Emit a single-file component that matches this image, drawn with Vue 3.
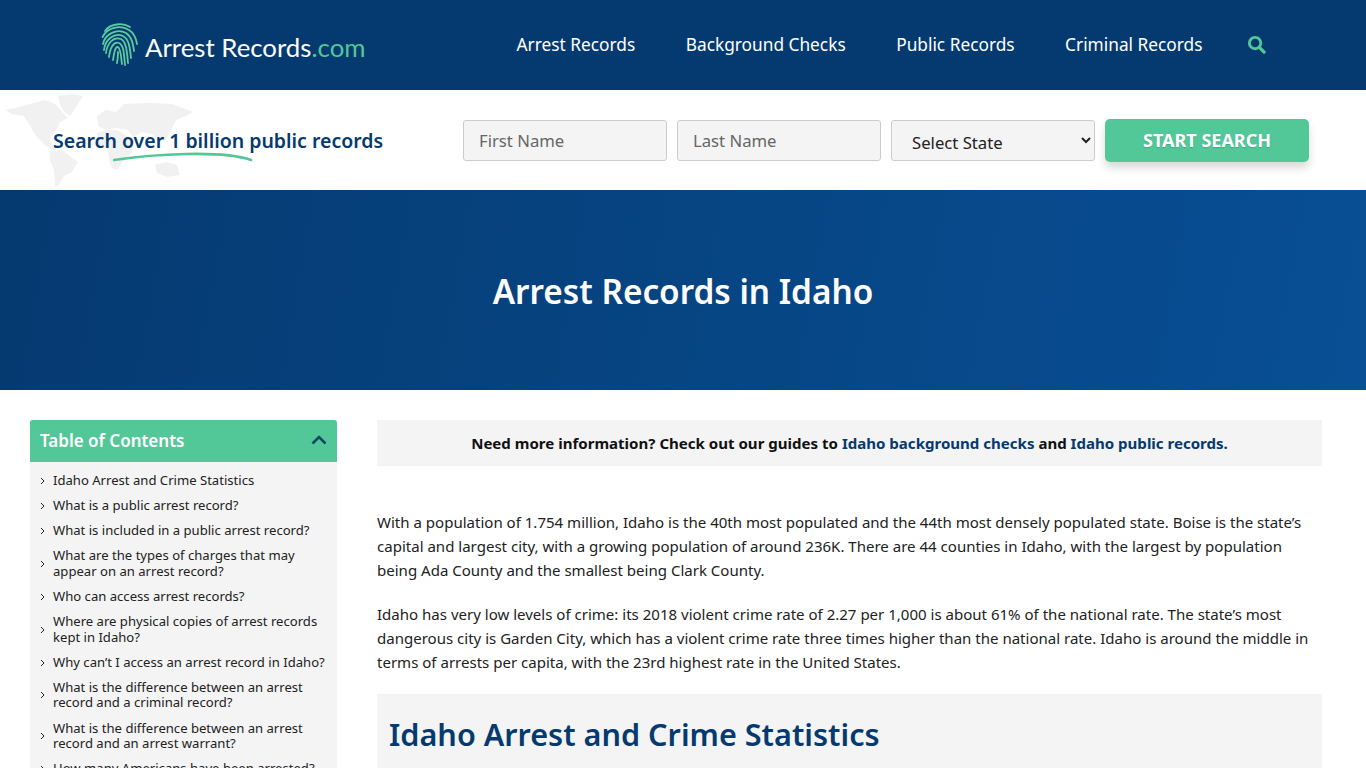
<template>
  <div class="page">
    <header class="topbar">
      <a class="logo" href="#">
        <svg class="print" viewBox="0 0 38 44" fill="none" stroke="#5ccca0" stroke-width="1.800" stroke-linecap="round">
          <path d="M4 9C9 2 21 0 29 5" />
          <path d="M1.500 15C6 6 19 2 28 8C33 11 35 16 36 22" />
          <path d="M2 22C4 12 16 6 25 11C31 15 32 22 33 29" />
          <path d="M3 28C4 18 13 10 22 14C28 17 29 26 30 36" />
          <path d="M5 31C6 22 12 14 20 17C25 19 26 29 27 41" />
          <path d="M8 35C9 27 12 19 18 21C23 23 23 33 24 43" />
          <path d="M12 38C13 32 14 24 17 25C20 27 20 36 21 42" />
          <path d="M16 41C17 36 17 32 17 30" />
        </svg>
        <span class="logo-text">Arrest Records<em>.com</em></span>
      </a>
      <nav class="main-nav">
        <a v-for="link in navLinks" :key="link" href="#">{{ link }}</a>
        <svg class="search-icon" viewBox="0 0 20 20" fill="none" stroke="#52c798" stroke-linecap="round">
          <circle cx="8.500" cy="8.500" r="6" stroke-width="3" />
          <path d="M13 13l5 5" stroke-width="3.400" />
        </svg>
      </nav>
    </header>

    <section class="searchbar">
      <svg class="world" viewBox="0 0 200 100" fill="#f1f1f1">
        <path d="M5 20L15 18L30 14L45 10L55 14L62 22L68 28L60 32L58 38L52 44L50 50L54 58L58 62L52 60L44 54L36 46L30 36L24 26L12 24Z" />
        <path d="M58 6L72 4L83 6L78 14L70 26L64 22L60 14Z" />
        <path d="M50 62L62 60L72 68L78 72L72 82L64 86L58 96L55 96L54 80L50 70Z" />
        <path d="M97 26L106 20L116 22L124 14L150 13L172 14L193 22L186 26L176 30L172 38L166 50L158 50L152 44L142 42L133 47L128 40L116 38L106 40L98 36Z" />
        <path d="M97 43L106 40L117 40L124 44L133 50L132 62L124 70L117 80L112 78L110 73L107 57L98 57Z" />
        <path d="M155 75L167 72L177 75L180 85L167 87L157 83Z" />
      </svg>
      <h2 class="slogan">
        Search over 1 billion public records
        <svg class="swoosh" viewBox="0 0 140 12" fill="none" stroke="#52c798" stroke-width="2.600" stroke-linecap="round">
          <path d="M1 9C40 3 110 -1 138 9" />
        </svg>
      </h2>
      <form class="search-form" @submit.prevent>
        <input type="text" placeholder="First Name" />
        <input type="text" placeholder="Last Name" />
        <select>
          <option>Select State</option>
        </select>
        <button type="submit">START SEARCH</button>
      </form>
    </section>

    <section class="hero">
      <h1>Arrest Records in Idaho</h1>
    </section>

    <div class="content">
      <aside class="toc">
        <div class="toc-head">
          <span>Table of Contents</span>
          <svg viewBox="0 0 16 10" fill="none" stroke="#0f4a63" stroke-width="2.600">
            <path d="M1.500 8.500L8 2l6.500 6.500" />
          </svg>
        </div>
        <ul>
          <li v-for="item in tocItems" :key="item">
            <svg viewBox="0 0 5 8" fill="none" stroke="#222" stroke-width="1">
              <path d="M1 1l3 3-3 3" />
            </svg>
            <a href="#">{{ item }}</a>
          </li>
        </ul>
      </aside>

      <main class="article">
        <p class="guides">
          Need more information? Check out our guides to
          <a href="#">Idaho background checks</a> and
          <a href="#">Idaho public records.</a>
        </p>
        <p>
          With a population of 1.754 million, Idaho is the 40th most populated and the 44th most densely populated state. Boise is the state’s capital and largest city, with a growing population of around 236K. There are 44 counties in Idaho, with the largest by population being Ada County and the smallest being Clark County.
        </p>
        <p>
          Idaho has very low levels of crime: its 2018 violent crime rate of 2.27 per 1,000 is about 61% of the national rate. The state’s most dangerous city is Garden City, which has a violent crime rate three times higher than the national rate. Idaho is around the middle in terms of arrests per capita, with the 23rd highest rate in the United States.
        </p>
        <h2 class="section-title">Idaho Arrest and Crime Statistics</h2>
      </main>
    </div>
  </div>
</template>

<script setup>
const navLinks = ["Arrest Records", "Background Checks", "Public Records", "Criminal Records"];

const tocItems = [
  "Idaho Arrest and Crime Statistics",
  "What is a public arrest record?",
  "What is included in a public arrest record?",
  "What are the types of charges that may appear on an arrest record?",
  "Who can access arrest records?",
  "Where are physical copies of arrest records kept in Idaho?",
  "Why can’t I access an arrest record in Idaho?",
  "What is the difference between an arrest record and a criminal record?",
  "What is the difference between an arrest record and an arrest warrant?",
  "How many Americans have been arrested?"
];
</script>

<style>
html,
body {
  margin: 0;
  overflow: hidden;
}
</style>

<style scoped>
.page {
  height: 768px;
  overflow: hidden;
  background: #fff;
  color: #222;
  font-family: "Noto Sans", "Open Sans", sans-serif;
}
a {
  text-decoration: none;
}

/* top bar */
.topbar {
  height: 90px;
  box-sizing: border-box;
  padding: 0 100px 2px 101px;
  background: #053a70;
  display: flex;
  align-items: center;
  justify-content: space-between;
}
.logo {
  display: flex;
  align-items: center;
  gap: 6px;
}
.print {
  width: 38px;
  height: 44px;
}
.logo-text {
  font-family: Lato, sans-serif;
  font-size: 25.8px;
  color: #fff;
  margin-top: 5px;
}
.logo-text em {
  font-style: normal;
  color: #52c798;
}
.main-nav {
  display: flex;
  align-items: center;
  gap: 50.5px;
}
.main-nav a {
  color: #fff;
  font-size: 17.3px;
}
.search-icon {
  width: 19px;
  height: 19px;
  margin-left: -6px;
}

/* search strip */
.searchbar {
  position: relative;
  height: 100px;
  padding: 0 57px 0 53px;
  display: flex;
  align-items: center;
  justify-content: space-between;
}
.world {
  position: absolute;
  left: 0;
  top: 0;
  width: 200px;
  height: 100px;
}
.slogan {
  position: relative;
  margin: 0;
  font-size: 19.5px;
  font-weight: 600;
  color: #053a70;
}
.swoosh {
  position: absolute;
  left: 60px;
  top: 24px;
  width: 140px;
  height: 12px;
}
.search-form {
  display: flex;
  gap: 10px;
  align-items: center;
}
.search-form input,
.search-form select {
  width: 204px;
  height: 41px;
  box-sizing: border-box;
  background: #f4f4f4;
  border: 1px solid #ccc;
  border-radius: 3px;
  font-family: inherit;
  font-size: 16.7px;
  color: #222;
}
.search-form input {
  padding: 0 15px;
}
.search-form input::placeholder {
  color: #666;
  opacity: 1;
}
.search-form select {
  padding: 5px 0 0 16px;
}
.search-form button {
  width: 204px;
  height: 43px;
  border: 0;
  border-radius: 5px;
  background: #52c798;
  color: #fff;
  font-family: inherit;
  font-size: 18px;
  font-weight: 700;
  text-shadow: 0 1px 1px rgba(0, 0, 0, 0.15);
  box-shadow: 0 6px 8px rgba(0, 0, 0, 0.15);
}

/* hero */
.hero {
  height: 200px;
  background: linear-gradient(100deg, #053a70, #084f95);
  display: flex;
  align-items: center;
  justify-content: center;
}
.hero h1 {
  margin: 2px 0 0;
  color: #fff;
  font-size: 33.35px;
  font-weight: 600;
}

/* body */
.content {
  display: grid;
  grid-template-columns: 307px 945px;
  gap: 40px;
  padding: 30px 44px 0 30px;
}
.toc {
  background: #f4f4f4;
  align-self: start;
}
.toc-head {
  height: 42px;
  box-sizing: border-box;
  padding: 0 10px 2px;
  background: #52c798;
  border-radius: 3px 3px 0 0;
  display: flex;
  align-items: center;
  justify-content: space-between;
  color: #fff;
  font-size: 17px;
  font-weight: 600;
}
.toc-head svg {
  width: 16px;
  height: 10px;
}
.toc ul {
  list-style: none;
  margin: 0;
  padding: 11px 10px 0;
}
.toc li {
  display: flex;
  align-items: center;
  gap: 8px;
  margin-bottom: 9.5px;
  font-size: 13.1px;
  line-height: 15.6px;
}
.toc li svg {
  flex: none;
  width: 5px;
  height: 8px;
}
.toc li a {
  color: #222;
}
.article p {
  margin: 0 0 20px;
  font-size: 15.04px;
  line-height: 24px;
}
.article .guides {
  margin-bottom: 44px;
  height: 46px;
  background: #f4f4f4;
  font-size: 15.05px;
  font-weight: 700;
  line-height: 46px;
  text-align: center;
  color: #111;
}
.guides a {
  color: #053a70;
}
.section-title {
  margin: 0;
  padding: 19px 12px 21px;
  background: #f4f4f4;
  color: #053a70;
  font-size: 30.6px;
  font-weight: 600;
}
</style>
